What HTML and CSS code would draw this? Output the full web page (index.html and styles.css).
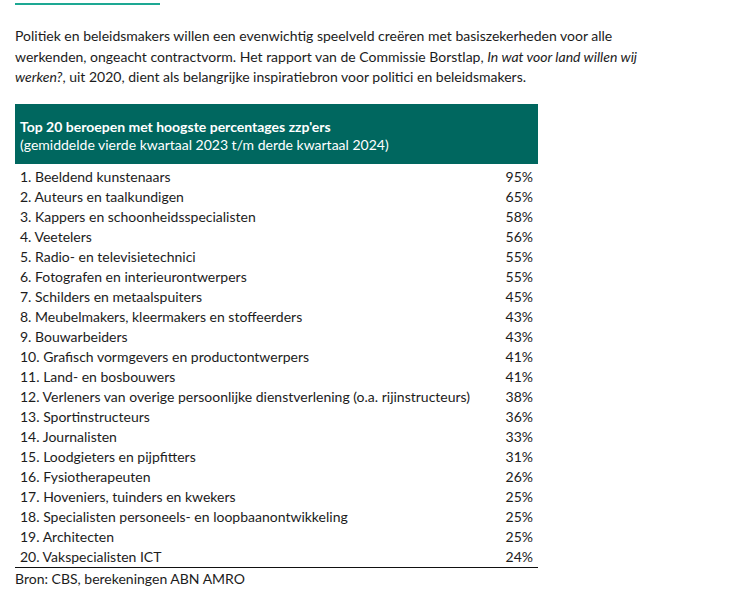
FILE: index.html
```html
<!DOCTYPE html>
<html lang="nl">
<head>
    <meta charset="UTF-8">
    <title>Top 20 beroepen zzp'ers</title>
    <link rel="stylesheet" href="styles.css">
</head>
<body>
    <div class="page">
        <div class="accent"></div>

        <p class="intro">
            Politiek en beleidsmakers willen een evenwichtig speelveld creëren met basiszekerheden voor alle
            werkenden, ongeacht contractvorm. Het rapport van de Commissie Borstlap, <em>In wat voor land willen wij
            werken?</em>, uit 2020, dient als belangrijke inspiratiebron voor politici en beleidsmakers.
        </p>

        <div class="table">
            <div class="table-head">
                <div class="table-title">Top 20 beroepen met hoogste percentages zzp'ers</div>
                <div class="table-sub">(gemiddelde vierde kwartaal 2023 t/m derde kwartaal 2024)</div>
            </div>
            <div class="rows" id="rows"></div>
        </div>
        <div class="source">Bron: CBS, berekeningen ABN AMRO</div>
    </div>

    <script>
        const data = [
            ['Beeldend kunstenaars', 95],
            ['Auteurs en taalkundigen', 65],
            ['Kappers en schoonheidsspecialisten', 58],
            ['Veetelers', 56],
            ['Radio- en televisietechnici', 55],
            ['Fotografen en interieurontwerpers', 55],
            ['Schilders en metaalspuiters', 45],
            ['Meubelmakers, kleermakers en stoffeerders', 43],
            ['Bouwarbeiders', 43],
            ['Grafisch vormgevers en productontwerpers', 41],
            ['Land- en bosbouwers', 41],
            ['Verleners van overige persoonlijke dienstverlening (o.a. rijinstructeurs)', 38],
            ['Sportinstructeurs', 36],
            ['Journalisten', 33],
            ['Loodgieters en pijpfitters', 31],
            ['Fysiotherapeuten', 26],
            ['Hoveniers, tuinders en kwekers', 25],
            ['Specialisten personeels- en loopbaanontwikkeling', 25],
            ['Architecten', 25],
            ['Vakspecialisten ICT', 24]
        ];

        const rows = document.getElementById('rows');
        data.forEach((item, i) => {
            const row = document.createElement('div');
            row.className = 'row';
            row.innerHTML = `
                <span class="name">${i + 1}. ${item[0]}</span>
                <span class="pct">${item[1]}%</span>
            `;
            rows.appendChild(row);
        });
    </script>
</body>
</html>
```

FILE: styles.css
```css
body {
    margin: 0;
    background: #ffffff;
    color: #1c1c1c;
    font-family: 'Lato', 'Open Sans', sans-serif;
    font-size: 14px;
}

.page {
    padding: 3px 15px 0 15px;
}

.accent {
    width: 145px;
    height: 2px;
    background: #1da893;
}

.intro {
    margin: 21px 0 0 0;
    width: 640px;
    line-height: 20.5px;
}

.intro em {
    font-style: italic;
}

.table {
    width: 523px;
    margin-top: 16px;
    border-bottom: 1px solid #111111;
}

.table-head {
    background: #00675f;
    color: #ffffff;
    padding: 14px 5px 10px 5px;
    line-height: 18px;
}

.table-title {
    font-weight: bold;
}

.rows {
    padding-top: 3px;
}

.row {
    display: flex;
    justify-content: space-between;
    height: 20.05px;
    line-height: 20px;
    padding: 0 5px;
}

.source {
    line-height: 22px;
}
```
